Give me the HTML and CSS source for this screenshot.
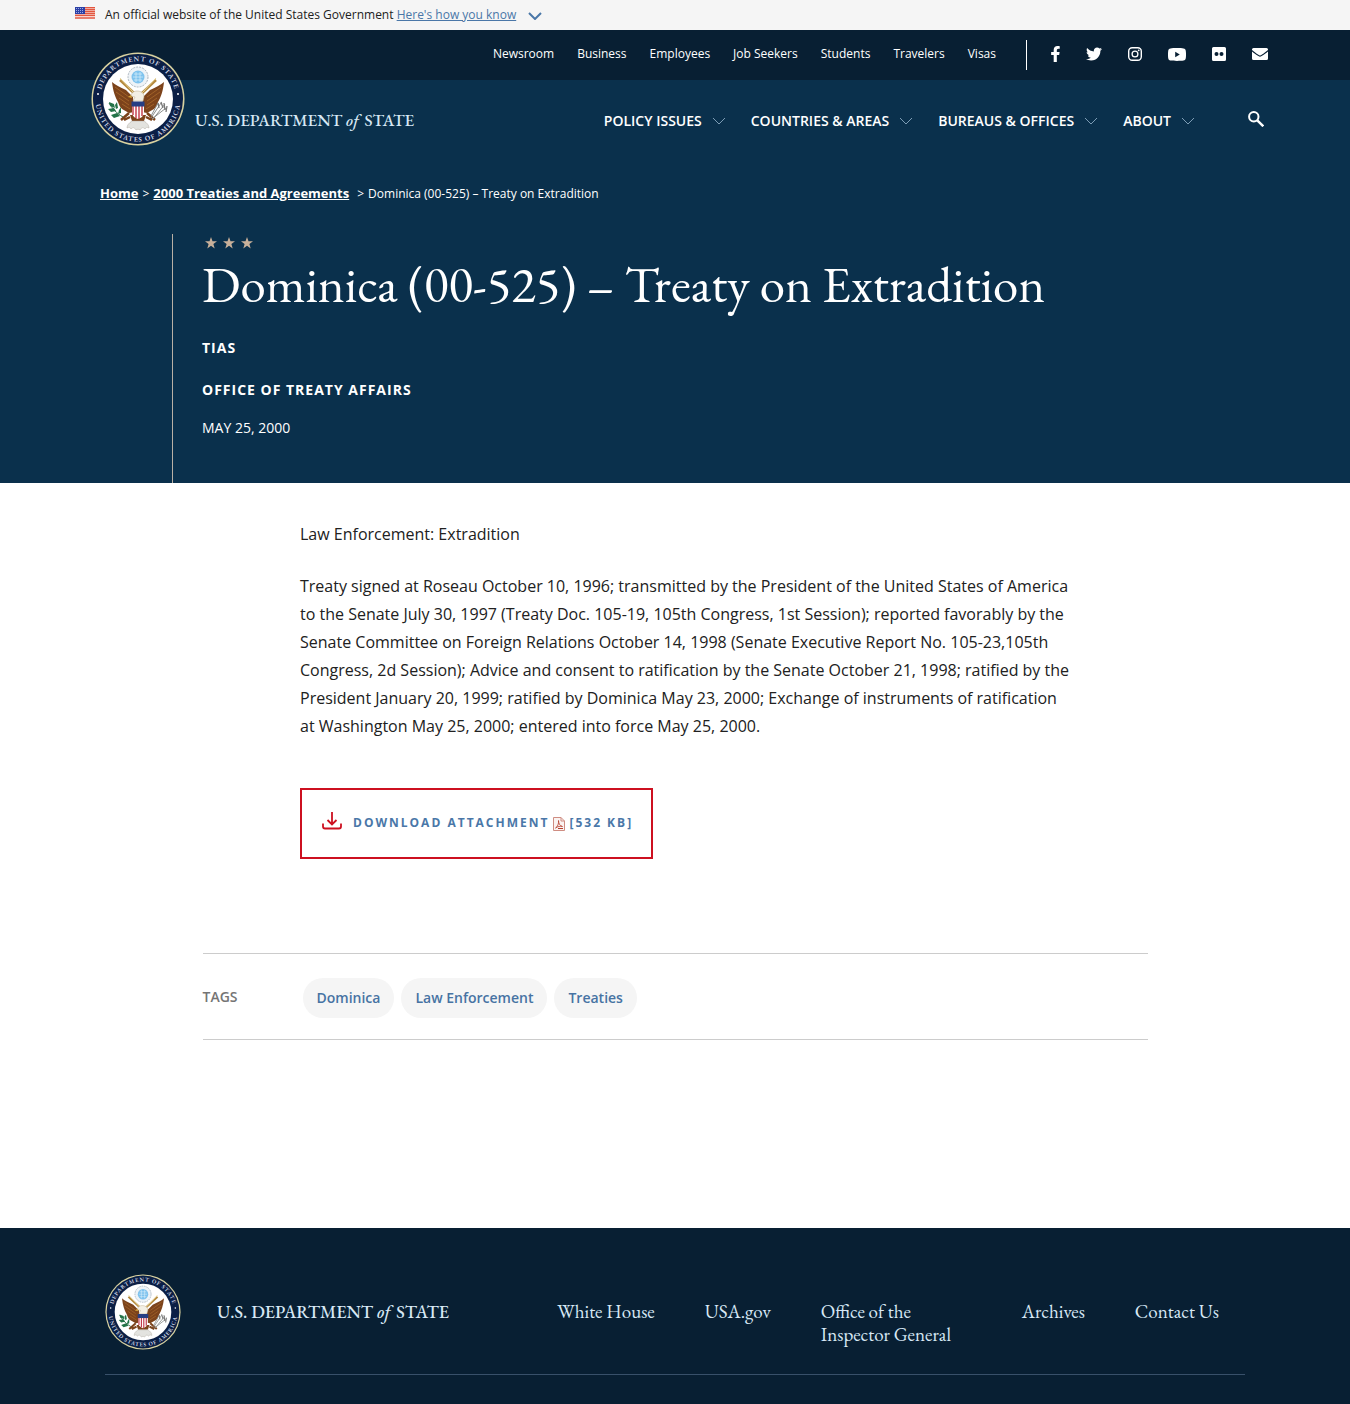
FILE: index.html
```html
<!DOCTYPE html>
<html lang="en">
<head>
<meta charset="utf-8">
<meta name="viewport" content="width=device-width, initial-scale=1">
<title>Dominica (00-525) – Treaty on Extradition</title>
<link rel="stylesheet" href="styles.css">
</head>
<body>
<svg class="defs" aria-hidden="true">
  <defs>
    <symbol id="caret" viewBox="0 0 14 8"><path d="M1 1l6 6 6-6" fill="none" stroke="currentColor"/></symbol>
    <symbol id="star" viewBox="0 0 12 12"><path d="M6 0l1.5 4.2H12L8.4 6.9 9.7 11.5 6 8.7l-3.7 2.8 1.3-4.6L0 4.200h4.500z" fill="currentColor"/></symbol>
    <symbol id="seal" viewBox="0 0 94 94">
      <circle cx="47" cy="47" r="46.500" fill="#d9d2a0"/>
      <circle cx="47" cy="47" r="45" fill="#0b1f45"/>
      <circle cx="47" cy="47" r="35" fill="#fff"/>
      <path id="arc-top" d="M9.700 53A37.800 37.800 0 1 1 84.300 53" fill="none"/>
      <path id="arc-bottom" d="M5.100 40A42.500 42.500 0 1 0 88.900 40" fill="none"/>
      <g class="seal-text">
        <text><textPath href="#arc-top" startOffset="50%" text-anchor="middle">DEPARTMENT OF STATE</textPath></text>
        <text><textPath href="#arc-bottom" startOffset="50%" text-anchor="middle">UNITED STATES OF AMERICA</textPath></text>
      </g>
      <circle cx="7" cy="42" r="1" fill="#fff"/><circle cx="87" cy="42" r="1" fill="#fff"/>
      <circle cx="47" cy="25" r="10" fill="#eef3f7" stroke="#a9b3bd" stroke-dasharray="2 1"/>
      <circle cx="47" cy="25" r="6.500" fill="#7fc3ee"/>
      <path d="M43 22h8M42 25h10M43 28h8M45 20v10M49 20v10" stroke="#d9effb" stroke-width=".7"/>
      <path d="M29 28l15 14M65 28L50 42" stroke="#b58a3e" stroke-width="2.500"/>
      <path d="M29 26l14 15M65 26L51 41" stroke="#ead9a0" stroke-width="1"/>
      <path d="M21 30c3 3 8 5 14 8l7 7 1 15-5 1-7-4c-2-2-3-4-4-7-3-5-5-11-6-20z" fill="#7c431b"/>
      <path d="M73 30c-3 3-8 5-14 8l-7 7-1 15 5 1 7-4c2-2 3-4 4-7 3-5 5-11 6-20z" fill="#7c431b"/>
      <path d="M24 35l14 10M25 40l13 9M28 46l10 7M31 52l8 5M70 35L56 45M69 40l-13 9M66 46l-10 7M63 52l-8 5" stroke="#a96a2c" stroke-width=".8"/>
      <path d="M38 61l-8 7M56 61l8 7M39 65l-6 3M55 65l6 3" stroke="#7c431b" stroke-width="2.500"/>
      <path d="M39 63h16l-2 6H41z" fill="#7c431b"/>
      <path d="M40 44c0-3 3-5 6-5 4 0 7 2 7 6l-1 4H42l2-4z" fill="#f3efe4" stroke="#b9a888" stroke-width=".5"/>
      <path d="M40 43l-3 2 4 1z" fill="#d7a53a"/>
      <path d="M41 51h12v9c0 4-3 6-6 7-3-1-6-3-6-7z" fill="#fff"/>
      <path d="M42 54v9M45 54v12M48 54v13M51 54v10" stroke="#bd2839" stroke-width="1.300"/>
      <path d="M40.500 49.500h13v5h-13z" fill="#263e83"/>
      <path d="M41 69c-3 2-5 4-5 7 2-1 3-1 4 1 2-2 3-2 5 1 1-1 3-1 4 0 2-3 3-3 5-1 1-2 2-2 4-1 0-3-2-5-5-7z" fill="#e3e3df" stroke="#b0aaa0" stroke-width=".5"/>
      <path d="M18 51c3 5 7 10 14 14" fill="none" stroke="#2d6b45" stroke-width="1"/>
      <path d="M18 50l5 2 1 4-5-2zM26 50l1 6-2 1-1-4zM17 57l6-1 2 3-5 1zM30 55v6l-3 1 1-4zM20 63l6-2 3 3-6 2z" fill="#237348"/>
      <path d="M62 67l12-15M60 66l10-15M61 67l14-11M60 64l7-13" stroke="#8c8f8d" stroke-width="1"/>
      <path d="M70 50l2 6M73 51l1 7M76 54l-1 6M67 51l1 5" stroke="#777" stroke-width="1.300"/>
    </symbol>
  </defs>
</svg>

<div class="gov-banner">
  <div class="gov-inner">
    <svg class="flag" viewBox="0 0 20 12" aria-hidden="true"><path fill="#fff" d="M0 0h20v12H0z"/><path d="M0 .5h20M0 2.500h20M0 4.500h20M0 6.500h20M0 8.500h20M0 11h20" stroke="#e2563f" stroke-width="1.400"/><path fill="#2c40a5" d="M0 0h10v7H0z"/><path d="M1 1.500h8M1 3.500h8M1 5.500h8" stroke="#b9c3f2" stroke-width=".8" stroke-dasharray="1 1"/></svg>
    <p>An official website of the United States Government <a href="#how">Here's how you know</a></p>
    <svg class="gov-caret" aria-hidden="true"><use href="#caret"/></svg>
  </div>
</div>

<header class="site-header">
  <div class="topbar">
    <nav class="top-links" aria-label="Audience">
      <a href="#newsroom">Newsroom</a><a href="#business">Business</a><a href="#employees">Employees</a><a href="#jobs">Job Seekers</a><a href="#students">Students</a><a href="#travelers">Travelers</a><a href="#visas">Visas</a>
    </nav>
    <div class="social">
      <a href="#facebook" aria-label="Facebook"><svg width="9" height="16" viewBox="22 0 280 512"><path fill="currentColor" d="M279.140 288l14.220-92.660h-88.910v-60.130c0-25.350 12.420-50.060 52.240-50.060h40.420V6.260S260.430 0 225.360 0c-73.220 0-121.080 44.380-121.080 124.720v70.620H22.890V288h81.390v224h100.170V288z"/></svg></a>
      <a href="#twitter" aria-label="Twitter"><svg width="16" height="16" viewBox="0 0 512 512"><path fill="currentColor" d="M459.370 151.716c.325 4.548.325 9.097.325 13.645 0 138.720-105.583 298.558-298.558 298.558-59.452 0-114.680-17.219-161.137-47.106 8.447.974 16.568 1.299 25.340 1.299 49.055 0 94.213-16.568 130.274-44.832-46.132-.975-84.792-31.188-98.112-72.772 6.498.974 12.995 1.624 19.818 1.624 9.421 0 18.843-1.300 27.614-3.573-48.081-9.747-84.143-51.980-84.143-102.985v-1.299c13.969 7.797 30.214 12.670 47.431 13.319-28.264-18.843-46.781-51.005-46.781-87.391 0-19.492 5.197-37.360 14.294-52.954 51.655 63.675 129.300 105.258 216.365 109.807-1.624-7.797-2.599-15.918-2.599-24.040 0-57.828 46.782-104.934 104.934-104.934 30.213 0 57.502 12.670 76.670 33.137 23.715-4.548 46.456-13.320 66.599-25.340-7.798 24.366-24.366 44.833-46.132 57.827 21.117-2.273 41.584-8.122 60.426-16.243-14.292 20.791-32.161 39.308-52.628 54.253z"/></svg></a>
      <a href="#instagram" aria-label="Instagram"><svg width="14" height="14" viewBox="0 0 14 14"><rect x=".7" y=".7" width="12.600" height="12.600" rx="3.500" fill="none" stroke="currentColor" stroke-width="1.400"/><circle cx="7" cy="7" r="2.900" fill="none" stroke="currentColor" stroke-width="1.300"/><circle cx="10.700" cy="3.300" r=".9" fill="currentColor"/></svg></a>
      <a href="#youtube" aria-label="YouTube"><svg width="18" height="13" viewBox="0 0 18 13"><path fill="currentColor" fill-rule="evenodd" d="M2.500.4C5 0 13 0 15.500.4 17 .7 17.600 1.500 17.800 3c.3 2.300.3 4.700 0 7-.2 1.500-.8 2.300-2.300 2.600-2.500.4-10.500.4-13 0C1 12.300.4 11.500.2 10c-.3-2.300-.3-4.700 0-7C.4 1.500 1 .7 2.500.4zM7.200 3.800v5.400l4.600-2.700z"/></svg></a>
      <a href="#flickr" aria-label="Flickr"><svg width="14" height="14" viewBox="0 0 14 14"><path fill="currentColor" fill-rule="evenodd" d="M1.500 0h11A1.500 1.500 0 0 1 14 1.500v11a1.500 1.500 0 0 1-1.500 1.500h-11A1.500 1.500 0 0 1 0 12.500v-11A1.500 1.500 0 0 1 1.500 0zM4.500 5a2 2 0 1 0 0 4 2 2 0 0 0 0-4zm5 0a2 2 0 1 0 0 4 2 2 0 0 0 0-4z"/></svg></a>
      <a href="#email" aria-label="Email"><svg width="16" height="12" viewBox="0 0 16 12"><path fill="currentColor" d="M1.500 0h13A1.500 1.500 0 0 1 16 1.500v.5C14 3.600 11.500 5.500 10 6.600c-1.600 1.200-2.400 1.200-4 0C4.500 5.500 2 3.600 0 2v-.5A1.500 1.500 0 0 1 1.500 0zM0 3.500c2 1.600 4 3 5.500 4.100 2 1.400 3 1.400 5 0C12 6.500 14 5.100 16 3.500v7a1.500 1.500 0 0 1-1.500 1.500h-13A1.500 1.500 0 0 1 0 10.500z"/></svg></a>
    </div>
  </div>
  <div class="mainbar">
    <a class="brand" href="#home">
      <svg class="brand-seal" role="img" aria-label="Department of State seal"><use href="#seal"/></svg>
      <span class="brand-name">U.S. DEPARTMENT <em>of</em> STATE</span>
    </a>
    <nav class="main-nav" aria-label="Main">
      <button type="button">Policy Issues<svg aria-hidden="true"><use href="#caret"/></svg></button>
      <button type="button">Countries &amp; Areas<svg aria-hidden="true"><use href="#caret"/></svg></button>
      <button type="button">Bureaus &amp; Offices<svg aria-hidden="true"><use href="#caret"/></svg></button>
      <button type="button">About<svg aria-hidden="true"><use href="#caret"/></svg></button>
    </nav>
    <button class="search" type="button" aria-label="Search"><svg width="16" height="16" viewBox="0 0 16 16"><circle cx="5.800" cy="5.800" r="4.700" fill="none" stroke="currentColor" stroke-width="2"/><path d="M9.300 9.300l6 6" stroke="currentColor" stroke-width="2.400"/></svg></button>
  </div>
</header>

<section class="hero">
  <nav class="crumbs" aria-label="Breadcrumb"><a href="#home">Home</a><span>&gt;</span><a href="#treaties">2000 Treaties and Agreements</a><span class="last-sep">&gt;</span><span>Dominica (00-525) – Treaty on Extradition</span></nav>
  <div class="hero-body">
    <div class="stars" aria-hidden="true"><svg><use href="#star"/></svg><svg><use href="#star"/></svg><svg><use href="#star"/></svg></div>
    <h1>Dominica (00-525) – Treaty on Extradition</h1>
    <p class="meta">TIAS</p>
    <p class="meta">Office of Treaty Affairs</p>
    <p class="date">May 25, 2000</p>
  </div>
</section>

<main>
  <article class="entry">
    <p>Law Enforcement: Extradition</p>
    <p>Treaty signed at Roseau October 10, 1996; transmitted by the President of the United States of America to the Senate July 30, 1997 (Treaty Doc. 105-19, 105th Congress, 1st Session); reported favorably by the Senate Committee on Foreign Relations October 14, 1998 (Senate Executive Report No. 105-23,105th Congress, 2d Session); Advice and consent to ratification by the Senate October 21, 1998; ratified by the President January 20, 1999; ratified by Dominica May 23, 2000; Exchange of instruments of ratification at Washington May 25, 2000; entered into force May 25, 2000.</p>
    <a class="download" href="#attachment">
      <svg class="dl-icon" viewBox="0 0 20 18" aria-hidden="true"><path d="M10 0v12M5.500 8l4.500 4.500L14.500 8M1 11.500V14.500Q1 16.500 3 16.500H17Q19 16.500 19 14.500V11.500" fill="none" stroke="currentColor" stroke-width="1.800"/></svg>
      <span>Download Attachment</span>
      <svg class="pdf-icon" viewBox="0 0 12 14" aria-hidden="true"><path d="M1 .5h7l3.500 3.500v9.500H.5V.5z" fill="#fbf3f1" stroke="#cf8d82"/><path d="M8 .5V4h3.500" fill="none" stroke="#cf8d82"/><path d="M2.500 11c2-1 3.500-4.500 3-7.500 0 3 1.500 5.500 4 6-2-.6-5 0-7 1.500z" fill="none" stroke="#b5402f" stroke-width=".8"/><path d="M5 11.500h5" stroke="#b5402f"/></svg>
      <span>[532 KB]</span>
    </a>
  </article>
  <section class="tags">
    <h2>Tags</h2>
    <ul><li><a href="#dominica">Dominica</a></li><li><a href="#law">Law Enforcement</a></li><li><a href="#treaties">Treaties</a></li></ul>
  </section>
</main>

<footer class="site-footer">
  <div class="footer-inner">
    <svg class="footer-seal" role="img" aria-label="Department of State seal"><use href="#seal"/></svg>
    <span class="footer-name">U.S. DEPARTMENT <em>of</em> STATE</span>
    <nav class="footer-links" aria-label="Footer"><a href="#wh">White House</a><a href="#usa">USA.gov</a><a class="oig" href="#oig">Office of the Inspector General</a><a href="#archives">Archives</a><a href="#contact">Contact Us</a></nav>
  </div>
</footer>
</body>
</html>
```
FILE: styles.css
```css
* { box-sizing: border-box; }
body { margin: 0; font-family: "Open Sans", sans-serif; font-size: 16px; color: #212121; background: #fff; }
p, h1, h2, ul { margin: 0; padding: 0; }
svg { display: block; flex: none; }
a { color: inherit; text-decoration: none; }
button { font: inherit; color: inherit; background: none; border: 0; padding: 0; cursor: pointer; }
em { margin-right: 2px; }
.defs { position: absolute; width: 0; height: 0; }
.seal-text { font: 600 7px "EB Garamond", "Liberation Serif", serif; letter-spacing: 1px; fill: #d5dcea; }

.gov-banner { background: #f5f5f5; font-size: 12px; line-height: 30px; }
.gov-inner { display: flex; align-items: center; max-width: 1200px; margin: 0 auto; }
.flag { width: 20px; height: 12px; margin-right: 10px; margin-bottom: 4px; }
.gov-inner a { color: #4a77a8; text-decoration: underline; }
.gov-caret { width: 14px; height: 8px; margin-left: 12px; margin-top: 2px; color: #4a77a8; stroke-width: 2; }

.site-header { background: #0a304c; color: #fff; }
.topbar { display: flex; justify-content: flex-end; align-items: center; height: 50px; padding-right: 82px; background: #081f33; }
.top-links { display: flex; gap: 23px; font-size: 12px; line-height: 16px; padding: 0 30px 2px 0; }
.social { display: flex; align-items: center; gap: 26px; height: 30px; padding: 0 0 2px 24px; border-left: 1px solid #fff; }
.mainbar { display: flex; align-items: center; height: 80px; padding: 0 86px 0 91px; }
.brand { display: flex; align-items: center; margin-right: auto; }
.brand-seal { width: 94px; height: 94px; margin-top: -42px; }
.brand-name { margin-left: 10px; font: 500 17px/24px "EB Garamond", "Liberation Serif", serif; color: #d7e8f5; white-space: nowrap; }
.main-nav { display: flex; gap: 25px; font-size: 14px; font-weight: 600; line-height: 20px; padding-top: 2px; }
.main-nav button { display: flex; align-items: center; gap: 10px; text-transform: uppercase; white-space: nowrap; }
.main-nav svg { width: 14px; height: 8px; color: #7d9db5; }
.search { margin-left: 53px; padding-bottom: 2px; }

.hero { background: #0a304c; color: #fff; padding-top: 24px; }
.crumbs { display: flex; align-items: center; gap: 4px; max-width: 1150px; margin: 0 auto; font-size: 12px; line-height: 20px; }
.crumbs a { font-size: 13px; font-weight: 700; line-height: 18px; padding-bottom: 2px; text-decoration: underline; }
.last-sep { margin-left: 4px; }
.hero-body { margin: 30px 172px 0; padding: 3px 0 45px 29px; border-left: 1px solid #b9b0a5; }
.stars { display: flex; gap: 6px; padding-left: 3px; color: #c8b09a; }
.stars svg { width: 12px; height: 12px; }
h1 { font: 400 51px/60px "EB Garamond", "Liberation Serif", serif; margin-top: 5px; }
.meta { font-size: 14px; font-weight: 700; line-height: 20px; letter-spacing: 1px; text-transform: uppercase; margin-top: 22px; }
h1 + .meta { margin-top: 24px; }
.date { font-size: 14px; line-height: 20px; text-transform: uppercase; margin-top: 18px; }

.entry { max-width: 798px; margin: 0 auto; padding: 37px 0 0 24px; line-height: 28px; }
.entry p { margin-bottom: 24px; }
.download { display: inline-flex; align-items: center; margin-top: 24px; padding: 0 18px 2px 20px; height: 71px; border: 2px solid #cd1020; color: #4a77a8; font-size: 12px; font-weight: 700; letter-spacing: 2px; text-transform: uppercase; }
.dl-icon { width: 20px; height: 18px; margin: 0 11px 3px 0; color: #cd1020; }
.pdf-icon { width: 12px; height: 14px; margin: 2px 4px 0; }
.tags { display: flex; align-items: center; width: 70%; margin: 94px auto 188px; height: 87px; border: 1px solid #ccc; border-width: 1px 0; }
.tags h2 { width: 100px; font-size: 14px; font-weight: 600; line-height: 20px; text-transform: uppercase; color: #757575; }
.tags ul { display: flex; gap: 7px; padding-top: 2px; list-style: none; }
.tags a { display: block; padding: 0 14px; border-radius: 20px; background: #f5f5f5; color: #4773a3; font-size: 14px; font-weight: 600; line-height: 40px; }

.site-footer { background: #081f33; color: #d7e8f5; padding: 46px 0 29px; font: 19px/23px "EB Garamond", "Liberation Serif", serif; }
.footer-inner { display: flex; align-items: center; max-width: 1140px; margin: 0 auto; padding-bottom: 24px; border-bottom: 1px solid #38506a; }
.footer-seal { width: 76px; height: 76px; }
.footer-name { margin-left: 36px; padding-bottom: 2px; font-size: 18px; font-weight: 500; white-space: nowrap; }
.footer-links { display: flex; align-items: flex-start; gap: 50px; margin: 21px 26px 0 auto; }
.oig { width: 151px; }
```
